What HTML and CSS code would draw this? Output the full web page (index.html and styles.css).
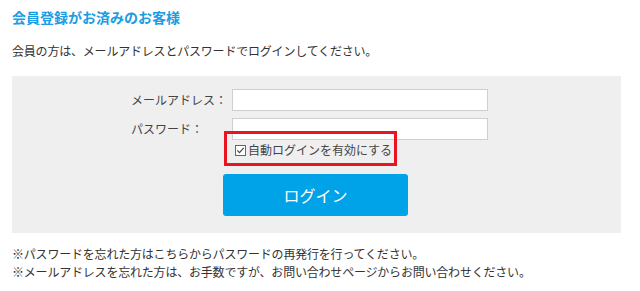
FILE: index.html
```html
<!DOCTYPE html>
<html lang="ja">
<head>
    <meta charset="UTF-8">
    <meta name="viewport" content="width=device-width, initial-scale=1.0">
    <title>ログイン</title>
    <link rel="stylesheet" href="styles.css">
</head>
<body>
    <div class="login">
        <h2 class="title">会員登録がお済みのお客様</h2>
        <p class="lead">会員の方は、メールアドレスとパスワードでログインしてください。</p>

        <div class="login-box">
            <div class="form">
                <label class="label" for="email">メールアドレス：</label>
                <input class="input" type="text" id="email">
                <label class="label" for="pass">パスワード：</label>
                <input class="input" type="password" id="pass">
                <div class="auto">
                    <svg class="check" width="11" height="11" viewBox="0 0 11 11">
                        <rect x="0.5" y="0.5" width="10" height="10" fill="#fff" stroke="#666"/>
                        <path d="M2.3 5.4 L4.5 7.6 L8.7 2.8" fill="none" stroke="#444" stroke-width="1.2"/>
                    </svg>自動ログインを有効にする
                </div>
            </div>
            <a class="btn">ログイン</a>
            <span class="mark"></span>
        </div>

        <p class="note">※パスワードを忘れた方はこちらからパスワードの再発行を行ってください。</p>
        <p class="note">※メールアドレスを忘れた方は、お手数ですが、お問い合わせページからお問い合わせください。</p>
    </div>
</body>
</html>
```
FILE: styles.css
```css
* {
    margin: 0;
    padding: 0;
    box-sizing: border-box;
}

body {
    font-family: "Noto Sans CJK JP", "Noto Sans", sans-serif;
    color: #333;
    background: #fff;
}

.login {
    padding: 8px 19px 0 12px;
}

.title {
    font-size: 14px;
    line-height: 18px;
    font-weight: bold;
    color: #1a9de3;
}

.lead {
    margin-top: 16px;
    font-size: 12px;
    line-height: 18px;
    letter-spacing: -0.2px;
}

.login-box {
    position: relative;
    margin-top: 16px;
    background: #efefef;
    padding: 13px 0 17px;
}

.form {
    display: grid;
    grid-template-columns: 101px 256px;
    row-gap: 7px;
    padding-left: 119px;
}

.label {
    font-size: 12px;
    line-height: 22px;
    color: #444;
}

.input {
    height: 22px;
    border: 1px solid #cfcfcf;
    background: #fff;
    outline: none;
}

.auto {
    grid-column: 2;
    margin-top: -6px;
    padding-left: 3px;
    font-size: 12px;
    line-height: 18px;
    color: #444;
    display: flex;
    align-items: center;
}

.check {
    margin-right: 2px;
}

.btn {
    display: flex;
    justify-content: center;
    align-items: center;
    width: 185px;
    height: 42px;
    margin: 15px 0 0 211px;
    background: #00a2e8;
    border-radius: 3px;
    color: #fff;
    font-size: 16px;
    cursor: pointer;
}

/* 注釈の赤枠 */
.mark {
    position: absolute;
    left: 212px;
    top: 55px;
    width: 173px;
    height: 35px;
    border: 3px solid #e8141f;
}

.note {
    font-size: 12px;
    line-height: 18px;
    letter-spacing: -0.2px;
}

.login-box + .note {
    margin-top: 12px;
}
```
